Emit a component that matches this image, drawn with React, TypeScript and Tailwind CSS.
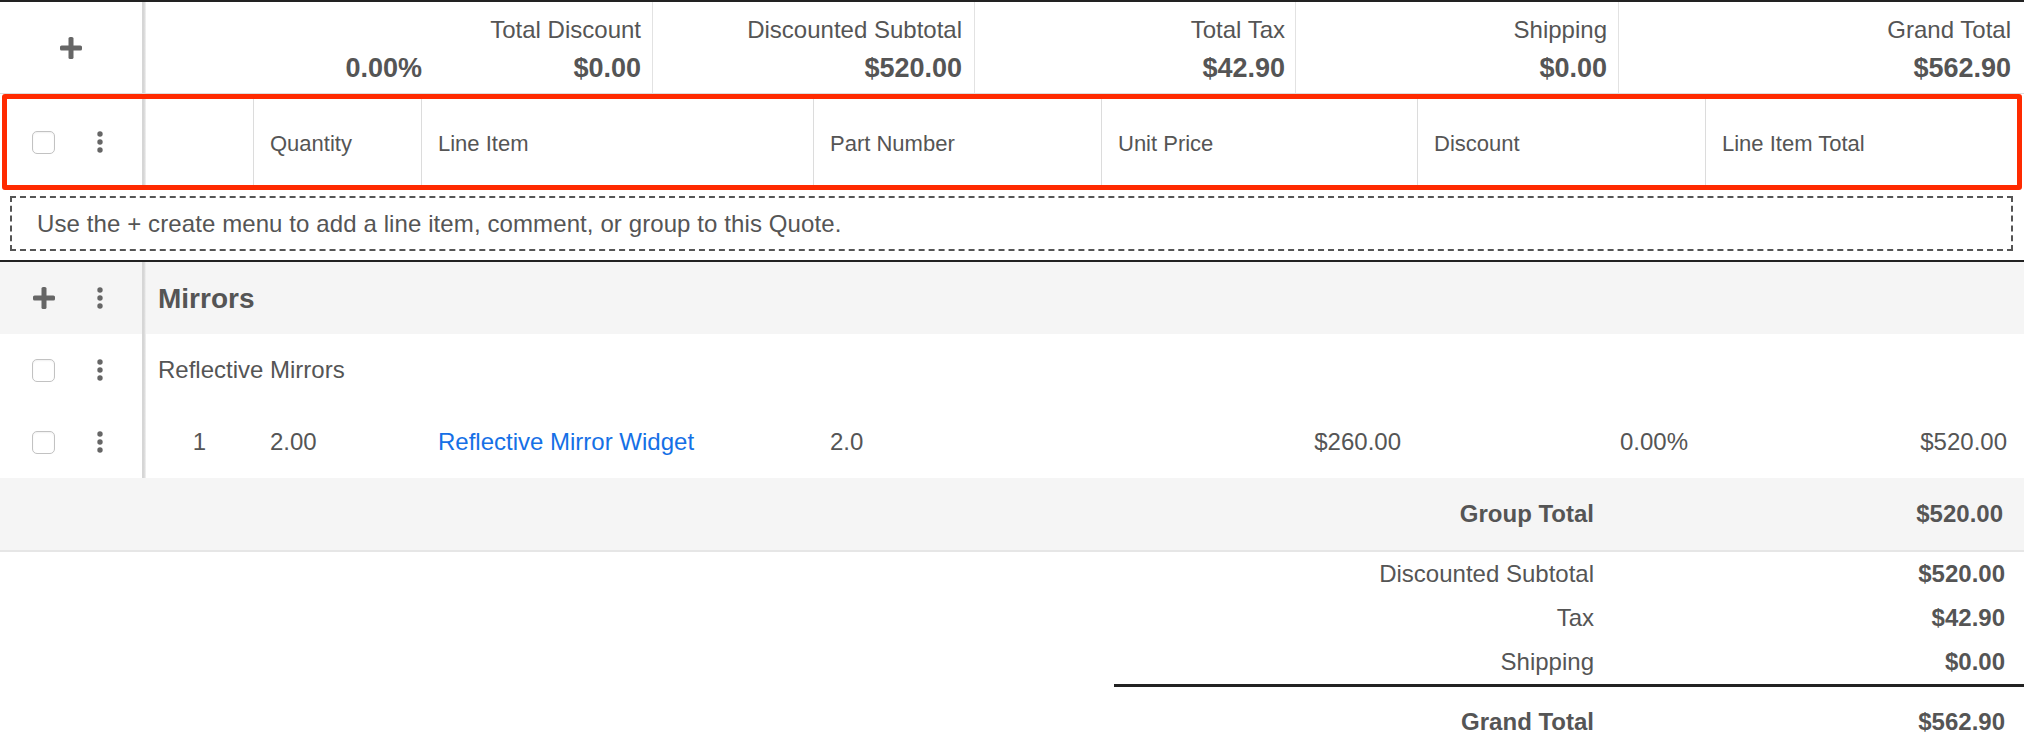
import React from "react";

const PlusIcon = () => (
  <svg width="22" height="22" viewBox="0 0 22 22" aria-hidden="true">
    <rect x="8.5" y="0" width="5" height="22" rx="1.6" fill="#666" />
    <rect x="0" y="8.5" width="22" height="5" rx="1.6" fill="#666" />
  </svg>
);

const Kebab = () => (
  <svg width="6" height="22" viewBox="0 0 6 22" aria-hidden="true">
    <circle cx="3" cy="3" r="2.7" fill="#666" />
    <circle cx="3" cy="11" r="2.7" fill="#666" />
    <circle cx="3" cy="19" r="2.7" fill="#666" />
  </svg>
);

const Checkbox = () => (
  <div className="w-[23px] h-[23px] rounded-[5px] border border-[#c2c2c2] bg-white shadow-[inset_0_1px_2px_rgba(0,0,0,0.06)]" />
);

// vertical rule that separates the action column from the data columns
const SideRule = () => (
  <div className="w-[4px] self-stretch bg-linear-to-r from-[#d6d6d6] from-50% to-[#f4f4f4]" />
);

type SummaryCell = { label?: string; value: string; w: string };

const summary: SummaryCell[] = [
  { value: "0.00%", w: "w-[289px] pr-[13px]" },
  { label: "Total Discount", value: "$0.00", w: "w-[218px] pr-[11px] border-r border-[#e2e2e2]" },
  { label: "Discounted Subtotal", value: "$520.00", w: "w-[322px] pr-[12px] border-r border-[#e2e2e2]" },
  { label: "Total Tax", value: "$42.90", w: "w-[321px] pr-[10px] border-r border-[#e2e2e2]" },
  { label: "Shipping", value: "$0.00", w: "w-[323px] pr-[11px] border-r border-[#e2e2e2]" },
  { label: "Grand Total", value: "$562.90", w: "flex-1 pr-[13px]" },
];

const headerCols = [
  { label: "Quantity", w: "w-[168px]" },
  { label: "Line Item", w: "w-[392px]" },
  { label: "Part Number", w: "w-[288px]" },
  { label: "Unit Price", w: "w-[316px]" },
  { label: "Discount", w: "w-[288px]" },
  { label: "Line Item Total", w: "flex-1" },
];

export default function App() {
  return (
    <div className="w-[2024px] h-[748px] overflow-hidden bg-white text-[#555] font-['Liberation_Sans',Arial,sans-serif]">
      {/* quote totals bar */}
      <div className="flex h-[94px] border-t-2 border-[#222] border-b border-b-[#dedede]">
        <div className="w-[142px] flex items-center justify-center">
          <PlusIcon />
        </div>
        <SideRule />
        <div className="flex flex-1">
          {summary.map((c, i) => (
            <div key={i} className={`${c.w} flex flex-col items-end pt-[14px]`}>
              <div className="text-[24px] leading-[28px] h-[28px]">{c.label ?? ""}</div>
              <div className="mt-[7px] text-[27px] leading-[34px] font-bold">{c.value}</div>
            </div>
          ))}
        </div>
      </div>

      {/* column headings */}
      <div className="mx-[2px] h-[96px] border-[5px] border-[#ff2a00] rounded-[3px] flex">
        <div className="w-[135px] flex items-center pl-[25px]">
          <Checkbox />
          <div className="ml-[42px] flex items-center">
            <Kebab />
          </div>
        </div>
        <SideRule />
        <div className="w-[107px]" />
        {headerCols.map((c) => (
          <div
            key={c.label}
            className={`${c.w} border-l border-[#dcdcdc] flex items-center pl-[16px] pt-[3px] text-[22px]`}
          >
            {c.label}
          </div>
        ))}
      </div>

      {/* empty-state drop zone */}
      <div className="mt-[6px] ml-[10px] mr-[11px] h-[55px] border-2 border-dashed border-[#555] flex items-center pl-[25px] text-[24px] tracking-[0.1px]">
        Use the + create menu to add a line item, comment, or group to this Quote.
      </div>

      <div className="mt-[9px] h-[2px] bg-[#222]" />

      {/* group: Mirrors */}
      <div className="flex h-[72px] bg-[#f5f5f5]">
        <div className="w-[142px] flex items-center pl-[33px]">
          <PlusIcon />
          <div className="ml-[42px] flex items-center">
            <Kebab />
          </div>
        </div>
        <SideRule />
        <div className="flex items-center pl-[12px] pt-[2px] text-[28px] font-bold">Mirrors</div>
      </div>

      {/* comment row */}
      <div className="flex h-[72px]">
        <div className="w-[142px] flex items-center pl-[32px]">
          <Checkbox />
          <div className="ml-[42px] flex items-center">
            <Kebab />
          </div>
        </div>
        <SideRule />
        <div className="flex items-center pl-[12px] text-[24px]">Reflective Mirrors</div>
      </div>

      {/* product row */}
      <div className="flex h-[72px] text-[24px]">
        <div className="w-[142px] flex items-center pl-[32px]">
          <Checkbox />
          <div className="ml-[42px] flex items-center">
            <Kebab />
          </div>
        </div>
        <SideRule />
        <div className="w-[107px] flex items-center justify-center">1</div>
        <div className="w-[168px] flex items-center pl-[17px]">2.00</div>
        <div className="w-[392px] flex items-center pl-[17px] text-[#1570e6]">Reflective Mirror Widget</div>
        <div className="w-[288px] flex items-center pl-[17px]">2.0</div>
        <div className="w-[316px] flex items-center justify-end pr-[16px]">$260.00</div>
        <div className="w-[288px] flex items-center justify-end pr-[17px]">0.00%</div>
        <div className="flex-1 flex items-center justify-end pr-[17px]">$520.00</div>
      </div>

      {/* group subtotal */}
      <div className="h-[74px] bg-[#f5f5f5] border-b-2 border-[#e6e6e6] flex justify-end text-[24px] font-bold">
        <div className="w-[910px] grid grid-cols-[500px_410px] items-center">
          <div className="text-right pr-[20px]">Group Total</div>
          <div className="text-right pr-[21px]">$520.00</div>
        </div>
      </div>

      {/* quote totals */}
      <div className="flex justify-end text-[24px]">
        <div className="w-[910px]">
          <div className="grid grid-cols-[500px_410px] h-[44px] items-center">
            <div className="text-right pr-[20px]">Discounted Subtotal</div>
            <div className="text-right pr-[19px] font-bold">$520.00</div>
          </div>
          <div className="grid grid-cols-[500px_410px] h-[44px] items-center">
            <div className="text-right pr-[20px]">Tax</div>
            <div className="text-right pr-[19px] font-bold">$42.90</div>
          </div>
          <div className="grid grid-cols-[500px_410px] h-[44px] items-center">
            <div className="text-right pr-[20px]">Shipping</div>
            <div className="text-right pr-[19px] font-bold">$0.00</div>
          </div>
          <div className="h-[3px] bg-[#222]" />
          <div className="grid grid-cols-[500px_410px] h-[70px] items-center font-bold">
            <div className="text-right pr-[20px]">Grand Total</div>
            <div className="text-right pr-[19px]">$562.90</div>
          </div>
        </div>
      </div>
    </div>
  );
}
